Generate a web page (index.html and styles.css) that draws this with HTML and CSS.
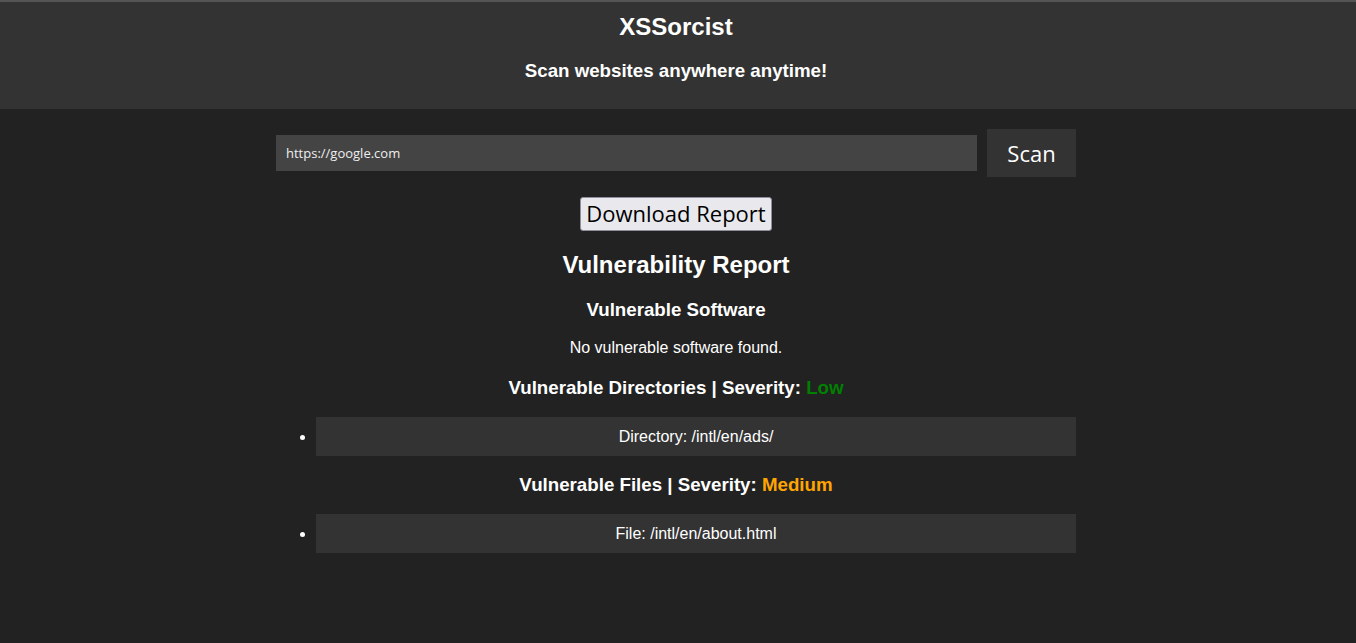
FILE: index.html
```html
<!DOCTYPE html>
<html>
<head>
<meta charset="utf-8">
<title>XSSorcist</title>
<link rel="stylesheet" href="styles.css">
</head>
<body>
<header class="site-header">
  <h1 class="title">XSSorcist</h1>
  <h3 class="tagline">Scan websites anywhere anytime!</h3>
</header>
<div class="content">
<main class="main">
  <form class="scan-form">
    <input class="url-input" type="text" value="https://google.com">
    <button class="scan-btn" type="button">Scan</button>
  </form>
  <div class="download-row">
    <button class="download-btn" type="button">Download Report</button>
  </div>
  <h2 class="report-title">Vulnerability Report</h2>
  <h3 class="section-title first">Vulnerable Software</h3>
  <p class="empty">No vulnerable software found.</p>
  <h3 class="section-title">Vulnerable Directories | Severity: <span class="sev-low">Low</span></h3>
  <ul class="items">
    <li class="item">Directory: /intl/en/ads/</li>
  </ul>
  <h3 class="section-title">Vulnerable Files | Severity: <span class="sev-med">Medium</span></h3>
  <ul class="items">
    <li class="item">File: /intl/en/about.html</li>
  </ul>
</main>
</div>
</body>
</html>
```
FILE: styles.css
```css
html, body {
  margin: 0;
  padding: 0;
}
body {
  background: #222222;
  color: #ffffff;
  font-family: "Liberation Sans", Arial, sans-serif;
  text-align: center;
}
.site-header {
  background: #333333;
  border-top: 2px solid #555555;
  padding: 11px 4px 27px 0;
}
.title {
  margin: 0;
  font-size: 24px;
  line-height: 28px;
}
.tagline {
  margin: 19px 0 0;
  font-size: 18.72px;
  line-height: 22px;
}
.content {
  padding-right: 4px;
}
.main {
  width: 800px;
  margin: 0 auto;
  padding-top: 20px;
}
.scan-form {
  display: flex;
  align-items: center;
  gap: 10px;
  margin: 0;
}
.url-input {
  flex: 1;
  height: 36px;
  box-sizing: border-box;
  background: #444444;
  border: none;
  color: #eeeeee;
  font-family: "Open Sans", "Noto Sans", sans-serif;
  font-size: 13px;
  padding: 0 10px;
  outline: none;
}
.scan-btn {
  width: 89px;
  height: 48px;
  background: #333333;
  color: #ffffff;
  border: none;
  font-family: "Open Sans", "Noto Sans", sans-serif;
  font-size: 22px;
  padding: 0;
}
.download-row {
  margin-top: 20px;
}
.download-btn {
  height: 34px;
  box-sizing: border-box;
  background: #e9e9ed;
  color: #000000;
  border: 1px solid #8f8f9d;
  border-radius: 3px;
  font-family: "Open Sans", "Noto Sans", sans-serif;
  font-size: 22px;
  padding: 0 5px 2px;
  line-height: 28px;
}
.report-title {
  margin: 20px 0 0;
  font-size: 24px;
  line-height: 28px;
}
.section-title {
  margin: 18px 0 0;
  font-size: 18.72px;
  line-height: 22px;
}
.section-title.first {
  margin-top: 20px;
}
.empty {
  margin: 18px 0 0;
  font-size: 16px;
  line-height: 18px;
}
.empty + .section-title {
  margin-top: 20px;
}
.sev-low {
  color: #008000;
}
.sev-med {
  color: #ffa500;
}
.items {
  margin: 18px 0 0;
  padding-left: 40px;
  text-align: center;
}
.item {
  background: #333333;
  padding: 10px;
  font-size: 16px;
  line-height: 19px;
}
```
